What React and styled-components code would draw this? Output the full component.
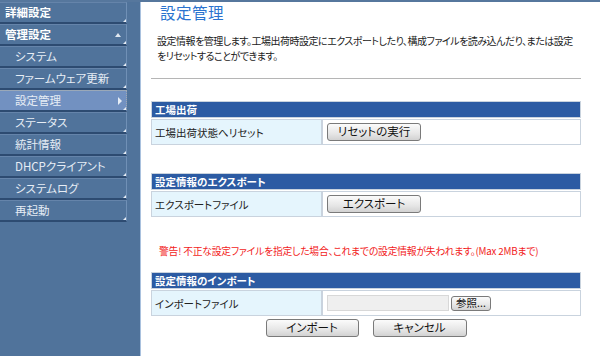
import React from 'react'
import styled, { createGlobalStyle } from 'styled-components'

const GlobalStyle = createGlobalStyle`
  html, body {
    margin: 0;
    padding: 0;
    background: #fff;
  }
  body {
    font-family: "Noto Sans CJK JP", "Liberation Sans", sans-serif;
    font-feature-settings: "palt";
    font-size: 11px;
    color: #222;
  }
`

const Page = styled.div`
  width: 600px;
  height: 356px;
  display: flex;
  flex-direction: column;
  overflow: hidden;
`

const TopStrip = styled.div`
  height: 2px;
  background: #56779d;
`

const Body = styled.div`
  flex: 1;
  display: flex;
`

const Sidebar = styled.nav`
  width: 141px;
  background: #50739b;
  border-right: 1px solid #a9c1de;
  box-sizing: border-box;
  display: flex;
  flex-direction: column;
`

const MenuItem = styled.div`
  position: relative;
  width: 127px;
  height: 22px;
  box-sizing: border-box;
  display: flex;
  align-items: center;
  padding-left: ${p => (p.$top ? '5px' : '15px')};
  padding-bottom: 1px;
  background: ${p => (p.$active ? '#7291c1' : '#50739b')};
  border-top: 1px solid ${p => (p.$active ? '#9aa8b8' : '#6584aa')};
  border-right: 1px ${p => (p.$active ? 'dotted #a0a8b0' : 'solid #7090b6')};
  border-bottom: 2px solid #2d4b71;
  color: ${p => (p.$top ? '#fff' : '#e6edf5')};
  font-weight: ${p => (p.$top ? 700 : 400)};
  font-size: 11.5px;
  white-space: nowrap;

  &::after {
    content: '';
    position: absolute;
    right: 0;
    bottom: 0;
    width: 0;
    height: 0;
    border-left: 3px solid transparent;
    border-bottom: 3px solid #e8eef6;
  }
`

const UpArrow = styled.span`
  position: absolute;
  right: 5px;
  top: 8px;
  width: 0;
  height: 0;
  border-left: 3px solid transparent;
  border-right: 3px solid transparent;
  border-bottom: 4px solid #dfe7f0;
`

const RightArrow = styled.span`
  position: absolute;
  right: 4px;
  top: 6px;
  width: 0;
  height: 0;
  border-top: 4px solid transparent;
  border-bottom: 4px solid transparent;
  border-left: 4px solid #e6edf6;
`

const Main = styled.main`
  flex: 1;
  background: #fff;
  padding-left: 10px;
`

const Title = styled.h1`
  margin: 0 0 0 9px;
  font-size: 15.5px;
  line-height: 20px;
  font-weight: 400;
  color: #2a73cf;
  letter-spacing: 0.5px;
`

const Intro = styled.p`
  margin: 12px 0 0 6px;
  font-size: 10px;
  letter-spacing: -0.5px;
  line-height: 14.5px;
  color: #222;
  white-space: nowrap;
`

const Rule = styled.hr`
  width: 430px;
  margin: 15px 0 0 0;
  border: 0;
  border-top: 1px solid #b5b5b5;
  height: 0;
`

const Section = styled.section`
  width: 430px;
  margin-top: ${p => p.$gap}px;
`

const SectionHead = styled.div`
  height: 17px;
  line-height: 16px;
  box-sizing: border-box;
  background: #2c5ba3;
  border: 1px solid #c9d3de;
  color: #fff;
  font-weight: 700;
  font-size: 10.5px;
  padding-left: 3px;
`

const Row = styled.div`
  display: grid;
  grid-template-columns: 171px 1fr;
  height: 26px;
  margin-top: 1px;
  box-sizing: border-box;
  border: 1px solid #c9d3de;
`

const Label = styled.div`
  background: #e5f5fd;
  border-right: 2px solid #c9d3de;
  display: flex;
  align-items: center;
  padding-left: 3px;
  font-size: 10.5px;
  color: #222;
`

const Value = styled.div`
  display: flex;
  align-items: center;
  padding-left: 4px;
  gap: 2px;
`

const Button = styled.button`
  width: ${p => p.$w || 94}px;
  height: ${p => p.$h || 18}px;
  padding: 0;
  border: 1px solid #7a7a7a;
  border-radius: 3px;
  background: linear-gradient(#fbfbfb, #e6e6e6 60%, #d2d2d2);
  font-family: inherit;
  font-feature-settings: "palt";
  font-size: ${p => p.$fs || 11.5}px;
  color: #111;
  line-height: 1;
  display: flex;
  align-items: center;
  justify-content: center;
`

const FileBox = styled.div`
  width: 122px;
  height: 16px;
  background: #efefef;
  border: 1px solid #d8d8d8;
  box-sizing: border-box;
`

const Warning = styled.p`
  margin: 28px 0 0 8px;
  color: #f21c1c;
  font-size: 9.8px;
  letter-spacing: -0.2px;
  line-height: 13px;
  white-space: nowrap;
`

const Actions = styled.div`
  width: 430px;
  display: flex;
  justify-content: center;
  gap: 14px;
  margin-top: 3px;
`

const menu = [
  { label: '詳細設定', top: true },
  { label: '管理設定', top: true, open: true },
  { label: 'システム' },
  { label: 'ファームウェア更新' },
  { label: '設定管理', active: true },
  { label: 'ステータス' },
  { label: '統計情報' },
  { label: 'DHCPクライアント' },
  { label: 'システムログ' },
  { label: '再起動' },
]

export default function App() {
  return (
    <Page>
      <GlobalStyle />
      <TopStrip />
      <Body>
        <Sidebar>
          {menu.map(m => (
            <MenuItem key={m.label} $top={m.top} $active={m.active}>
              {m.label}
              {m.open && <UpArrow />}
              {m.active && <RightArrow />}
            </MenuItem>
          ))}
        </Sidebar>
        <Main>
          <Title>設定管理</Title>
          <Intro>
            設定情報を管理します。工場出荷時設定にエクスポートしたり、構成ファイルを読み込んだり、または設定
            <br />
            をリセットすることができます。
          </Intro>
          <Rule />

          <Section $gap={22}>
            <SectionHead>工場出荷</SectionHead>
            <Row>
              <Label>工場出荷状態へリセット</Label>
              <Value>
                <Button>リセットの実行</Button>
              </Value>
            </Row>
          </Section>

          <Section $gap={28}>
            <SectionHead>設定情報のエクスポート</SectionHead>
            <Row>
              <Label>エクスポートファイル</Label>
              <Value>
                <Button>エクスポート</Button>
              </Value>
            </Row>
          </Section>

          <Warning>警告! 不正な設定ファイルを指定した場合、これまでの設定情報が失われます。(Max 2MBまで)</Warning>

          <Section $gap={14}>
            <SectionHead>設定情報のインポート</SectionHead>
            <Row>
              <Label>インポートファイル</Label>
              <Value>
                <FileBox />
                <Button $w={40} $h={15} $fs={10.5}>参照...</Button>
              </Value>
            </Row>
          </Section>

          <Actions>
            <Button $w={93}>インポート</Button>
            <Button $w={94}>キャンセル</Button>
          </Actions>
        </Main>
      </Body>
    </Page>
  )
}
